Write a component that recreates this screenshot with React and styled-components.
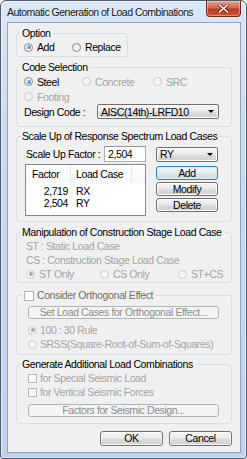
import React from 'react';
import styled, { createGlobalStyle, css } from 'styled-components';

const FONT = `"Liberation Sans", Arial, sans-serif`;

const GlobalStyle = createGlobalStyle`
  html, body { margin: 0; padding: 0; background: #ffffff; }
  body {
    font-family: ${FONT};
    font-size: 10.5px;
    letter-spacing: -0.4px;
    color: #000;
  }
  * { box-sizing: border-box; }
`;

const Window = styled.div`
  width: 247px;
  height: 459px;
  border: 1px solid #4c5b6b;
  border-radius: 6px 6px 3px 3px;
  background: linear-gradient(180deg, #dbe7f4 0%, #cadcf0 25%, #bfd3eb 100%);
  padding: 0 5px 5px 6px;
  display: flex;
  flex-direction: column;
  box-shadow: inset 0 0 0 1px rgba(255, 255, 255, 0.55);
`;

const TitleBar = styled.div`
  height: 21px;
  display: flex;
  align-items: flex-start;
`;

const Title = styled.div`
  font-size: 10.5px;
  letter-spacing: -0.5px;
  line-height: 22px;
  color: #1b1b1b;
  white-space: nowrap;
`;

const CloseButton = styled.div`
  margin-left: auto;
  width: 35px;
  height: 16px;
  border: 1px solid #6e2a22;
  border-top: none;
  border-radius: 0 0 4px 4px;
  background: linear-gradient(180deg, #e7a493 0%, #d0664f 45%, #bd3a22 55%, #c8553a 100%);
  box-shadow: inset 0 0 0 1px rgba(255, 220, 210, 0.45);
  display: flex;
  align-items: center;
  justify-content: center;
`;

const Client = styled.div`
  flex: 1;
  background: #f0f0f0;
  border: 1px solid #8ea4bf;
  padding: 4px 8px 0 8px;
  display: flex;
  flex-direction: column;
`;

const GroupBox = styled.fieldset`
  margin: ${(p) => p.$mt || 0}px 0 0 0;
  width: ${(p) => (p.$w ? `${p.$w}px` : 'auto')};
  align-self: ${(p) => (p.$w ? 'flex-start' : 'stretch')};
  height: ${(p) => p.$h}px;
  border: 1px solid #d5dfe5;
  border-radius: 3px;
  padding: 0;
  min-width: 0;
`;

const Legend = styled.legend`
  padding: 0 2px;
  margin-left: ${(p) => p.$ml ?? 3}px;
  height: 13px;
  line-height: 13px;
  color: ${(p) => p.$color || '#000'};
  display: flex;
  align-items: center;
  gap: 3px;
  white-space: nowrap;
`;

const Body = styled.div`
  padding: ${(p) => p.$pad || '0'};
  display: flex;
  flex-direction: column;
`;

const Row = styled.div`
  display: flex;
  align-items: center;
  height: ${(p) => p.$h || 15}px;
  padding-left: ${(p) => p.$pl || 0}px;
  margin-top: ${(p) => p.$mt || 0}px;
  color: ${(p) => p.$color || 'inherit'};
  white-space: nowrap;
`;

const Choice = styled.label`
  display: flex;
  align-items: center;
  gap: ${(p) => p.$gap ?? 4}px;
  width: ${(p) => (p.$w ? `${p.$w}px` : 'auto')};
  color: ${(p) => (p.$disabled ? '#a4a4a4' : '#000')};
  white-space: nowrap;
  flex: none;
`;

const RadioDot = styled.span`
  width: 9px;
  height: 9px;
  border-radius: 50%;
  border: 1px solid ${(p) => (p.$disabled ? '#c9c9c9' : '#8a8a8a')};
  background: ${(p) => (p.$disabled ? '#f4f4f4' : 'linear-gradient(135deg, #e6e6e6, #fbfbfb)')};
  display: flex;
  align-items: center;
  justify-content: center;
  flex: none;
  &::after {
    content: '';
    width: 4px;
    height: 4px;
    border-radius: 50%;
    display: ${(p) => (p.$checked ? 'block' : 'none')};
    background: ${(p) => (p.$disabled ? '#a8a8a8' : 'radial-gradient(circle at 35% 35%, #8fc6f0, #1b5ea6)')};
  }
`;

const CheckBox = styled.span`
  width: ${(p) => p.$size || 9}px;
  height: ${(p) => p.$size || 9}px;
  border: 1px solid ${(p) => (p.$disabled ? '#b5b5b5' : '#8e8f8f')};
  background: ${(p) => (p.$disabled ? '#fbfbfb' : '#fff')};
  flex: none;
`;

const Text = styled.span`
  width: ${(p) => (p.$w ? `${p.$w}px` : 'auto')};
  padding-left: ${(p) => p.$pl || 0}px;
  flex: none;
`;

const Button = styled.button`
  width: ${(p) => p.$w}px;
  height: ${(p) => p.$h || 14}px;
  margin: 0;
  padding: 0;
  font: inherit;
  letter-spacing: inherit;
  line-height: 1;
  white-space: nowrap;
  color: #000;
  border: 1px solid #707070;
  border-radius: 3px;
  background: linear-gradient(180deg, #f4f4f4 0%, #ebebeb 48%, #dddddd 52%, #d0d0d0 100%);
  box-shadow: inset 0 0 0 1px #fbfbfb;
  display: flex;
  align-items: center;
  justify-content: center;
  flex: none;
  ${(p) =>
    p.$default &&
    css`
      border-color: #3c7fb1;
      box-shadow: inset 0 0 0 1px #c9eaf8;
      background: linear-gradient(180deg, #f1f6f9 0%, #e8eff3 48%, #dde6eb 52%, #d3dde3 100%);
    `}
  ${(p) =>
    p.disabled &&
    css`
      border-color: #b0b5b8;
      background: #f4f4f4;
      box-shadow: none;
      color: #8d8d8d;
    `}
`;

const Combo = styled.div`
  width: ${(p) => p.$w}px;
  height: 15px;
  border: 1px solid #707070;
  border-radius: 2px;
  background: linear-gradient(180deg, #f4f4f4 0%, #ebebeb 48%, #dddddd 52%, #d0d0d0 100%);
  box-shadow: inset 0 0 0 1px #fbfbfb;
  display: flex;
  align-items: center;
  padding: 0 4px 0 3px;
  flex: none;
  white-space: nowrap;
  span { flex: 1; }
  &::after {
    content: '';
    border-left: 3px solid transparent;
    border-right: 3px solid transparent;
    border-top: 3px solid #000;
  }
`;

const TextInput = styled.div`
  width: ${(p) => p.$w}px;
  height: 16px;
  border: 1px solid #abadb3;
  border-top-color: #8f939b;
  background: #fff;
  padding-left: 3px;
  display: flex;
  align-items: center;
  flex: none;
`;

const ScaleGrid = styled.div`
  display: grid;
  grid-template-columns: 121px 62px;
  column-gap: 10px;
  padding: 3px 0 0 8px;
`;

const ButtonColumn = styled.div`
  display: flex;
  flex-direction: column;
  gap: 2px;
  padding-top: 4px;
`;

const List = styled.div`
  height: 52px;
  margin-top: 2px;
  border: 1px solid #828790;
  background: #fff;
`;

const ListHeader = styled.div`
  display: grid;
  grid-template-columns: 45px 61px 1fr;
  height: 18px;
  background: linear-gradient(180deg, #ffffff 0%, #f7f8fa 100%);
  white-space: nowrap;
`;

const HeaderCell = styled.div`
  border-right: 1px solid #e3e5e8;
  padding-left: ${(p) => p.$pl || 0}px;
  display: flex;
  align-items: center;
  &:last-child { border-right: none; }
`;

const ListRow = styled.div`
  display: grid;
  grid-template-columns: 45px 61px 1fr;
  height: 12px;
  line-height: 12px;
`;

const Cell = styled.div`
  text-align: ${(p) => p.$align || 'left'};
  padding: ${(p) => p.$pad || '0'};
`;

const Rows = styled.div`
  padding-top: 2px;
`;

const Footer = styled.div`
  display: flex;
  justify-content: flex-end;
  gap: 6px;
  margin-top: 7px;
`;

const CloseIcon = () => (
  <svg width="11" height="9" viewBox="0 0 11 9">
    <path d="M1.5 1 L9.5 8 M9.5 1 L1.5 8" stroke="#5a1c14" strokeWidth="3" strokeLinecap="square" />
    <path d="M1.5 1 L9.5 8 M9.5 1 L1.5 8" stroke="#ffffff" strokeWidth="1.6" strokeLinecap="square" />
  </svg>
);

const Radio = ({ label, checked, disabled, w, gap }) => (
  <Choice $w={w} $disabled={disabled} $gap={gap}>
    <RadioDot $checked={checked} $disabled={disabled} />
    {label}
  </Choice>
);

export default function App() {
  const rows = [
    ['2,719', 'RX'],
    ['2,504', 'RY'],
  ];
  return (
    <>
      <GlobalStyle />
      <Window>
        <TitleBar>
          <Title>Automatic Generation of Load Combinations</Title>
          <CloseButton>
            <CloseIcon />
          </CloseButton>
        </TitleBar>
        <Client>
          <GroupBox $w={112} $h={30}>
            <Legend>Option</Legend>
            <Row $pl={7} $h={14}>
              <Radio label="Add" checked w={48} />
              <Radio label="Replace" />
            </Row>
          </GroupBox>

          <GroupBox $mt={4} $h={66}>
            <Legend>Code Selection</Legend>
            <Body $pad="0 0 0 7px">
              <Row>
                <Radio label="Steel" checked w={58} />
                <Radio label="Concrete" disabled w={71} />
                <Radio label="SRC" disabled />
              </Row>
              <Row>
                <Radio label="Footing" disabled />
              </Row>
              <Row>
                <Text $w={73} $pl={-1}>Design Code :</Text>
                <Combo $w={122}>
                  <span>AISC(14th)-LRFD10</span>
                </Combo>
              </Row>
            </Body>
          </GroupBox>

          <GroupBox $mt={3} $h={92}>
            <Legend>Scale Up of Response Spectrum Load Cases</Legend>
            <ScaleGrid>
              <Row $h={16}>
                <Text $w={79} $pl={1}>Scale Up Factor :</Text>
                <TextInput $w={42}>2,504</TextInput>
              </Row>
              <Row $h={16}>
                <Combo $w={62}>
                  <span>RY</span>
                </Combo>
              </Row>
              <List>
                <ListHeader>
                  <HeaderCell $pl={6}>Factor</HeaderCell>
                  <HeaderCell $pl={5}>Load Case</HeaderCell>
                  <HeaderCell />
                </ListHeader>
                <Rows>
                  {rows.map(([f, c]) => (
                    <ListRow key={c}>
                      <Cell $align="right" $pad="0 3px 0 0">{f}</Cell>
                      <Cell $pad="0 0 0 5px">{c}</Cell>
                      <Cell />
                    </ListRow>
                  ))}
                </Rows>
              </List>
              <ButtonColumn>
                <Button $w={62} $default>Add</Button>
                <Button $w={62}>Modify</Button>
                <Button $w={62}>Delete</Button>
              </ButtonColumn>
            </ScaleGrid>
          </GroupBox>

          <GroupBox $mt={4} $h={57}>
            <Legend>Manipulation of Construction Stage Load Case</Legend>
            <Body $pad="0 0 0 9px">
              <Row $h={14} $color="#a4a4a4">ST : Static Load Case</Row>
              <Row $h={14} $color="#a4a4a4">CS : Construction Stage Load Case</Row>
              <Row $h={14}>
                <Radio label="ST Only" checked disabled w={74} />
                <Radio label="CS Only" disabled w={78} />
                <Radio label="ST+CS" disabled />
              </Row>
            </Body>
          </GroupBox>

          <GroupBox $mt={6} $h={66}>
            <Legend $ml={5} $color="#707070">
              <CheckBox $size={10} $disabled />
              Consider Orthogonal Effect
            </Legend>
            <Body $pad="4px 0 0 11px">
              <Button $w={191} $h={13} disabled>
                Set Load Cases for Orthogonal Effect...
              </Button>
              <Row $h={14} $mt={4}>
                <Radio label="100 : 30 Rule" checked disabled gap={3} />
              </Row>
              <Row $h={14}>
                <Radio label="SRSS(Square-Root-of-Sum-of-Squares)" disabled gap={3} />
              </Row>
            </Body>
          </GroupBox>

          <GroupBox $mt={3} $h={66}>
            <Legend>Generate Additional Load Combinations</Legend>
            <Body $pad="0 0 0 11px">
              <Row $h={14}>
                <Choice $disabled $gap={3}>
                  <CheckBox $disabled />
                  for Special Seismic Load
                </Choice>
              </Row>
              <Row $h={14}>
                <Choice $disabled $gap={3}>
                  <CheckBox $disabled />
                  for Vertical Seismic Forces
                </Choice>
              </Row>
              <Row $h={13} $mt={5}>
                <Button $w={191} $h={13} disabled>
                  Factors for Seismic Design...
                </Button>
              </Row>
            </Body>
          </GroupBox>

          <Footer>
            <Button $w={63} $h={15}>OK</Button>
            <Button $w={63} $h={15}>Cancel</Button>
          </Footer>
        </Client>
      </Window>
    </>
  );
}
